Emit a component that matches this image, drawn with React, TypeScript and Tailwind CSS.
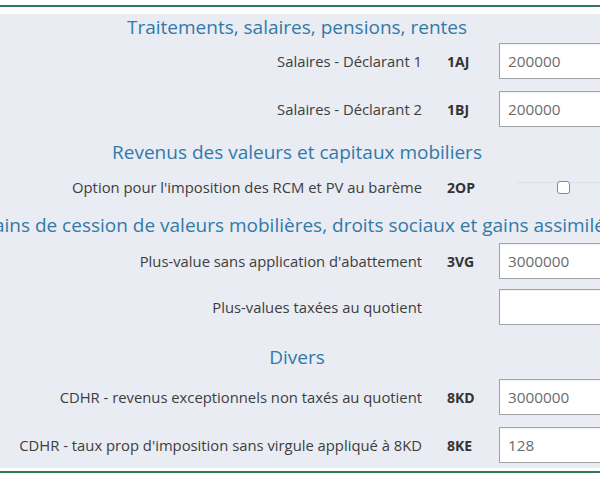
import type { ReactNode } from "react";

const font = { fontFamily: '"Open Sans", "Liberation Sans", sans-serif' };

function Heading({ children, className = "" }: { children: ReactNode; className?: string }) {
  // centred on the form column, long titles overflow on both sides
  return (
    <div className={`flex w-[594px] justify-center ${className}`}>
      <h2 className="shrink-0 whitespace-nowrap text-[19px] leading-[24px] font-normal text-[#3379a8]">{children}</h2>
    </div>
  );
}

function Row({
  label,
  code,
  value,
  className = "",
}: {
  label: string;
  code?: string;
  value?: string;
  className?: string;
}) {
  return (
    <div className={`grid h-[36px] grid-cols-[422px_77px_1fr] items-center ${className}`}>
      <span className="text-right text-[14.8px] whitespace-nowrap text-[#3d3d3d]">{label}</span>
      <span className="pl-[25px] text-[14px] font-bold text-[#333]">{code}</span>
      <input
        readOnly
        value={value ?? ""}
        className="h-[36px] w-[160px] border border-[#a2a2a2] bg-white px-[8px] text-[15.3px] text-[#6b6b6b] shadow-[inset_0_1px_1px_rgba(0,0,0,0.06)] outline-none"
      />
    </div>
  );
}

export default function App() {
  return (
    <div className="h-[480px] w-[600px] overflow-hidden bg-white pt-[5px]" style={font}>
      <div className="h-[2px] bg-[#2d7a5a]" />
      <div className="h-[7px]" />
      <div className="flex flex-col bg-[#e9ecf2] pt-[1px] pb-[5px]">
        <Heading>Traitements, salaires, pensions, rentes</Heading>
        <Row className="mt-[4px]" label="Salaires - Déclarant 1" code="1AJ" value="200000" />
        <Row className="mt-[12px]" label="Salaires - Déclarant 2" code="1BJ" value="200000" />

        <Heading className="mt-[13px]">Revenus des valeurs et capitaux mobiliers</Heading>
        <div className="mt-[12px] grid h-[20px] grid-cols-[422px_77px_1fr] items-center">
          <span className="text-right text-[14.8px] whitespace-nowrap text-[#3d3d3d]">
            Option pour l'imposition des RCM et PV au barème
          </span>
          <span className="pl-[25px] text-[14px] font-bold text-[#333]">2OP</span>
          <div className="ml-[18px] h-[14px] self-start mt-[6px] border-t border-[#dde1e7]">
            <div className="ml-[40px] -mt-[2px] h-[13px] w-[13px] rounded-[3px] border border-[#8a8a8a] bg-white" />
          </div>
        </div>

        <Heading className="mt-[17px]">
          Gains de cession de valeurs mobilières, droits sociaux et gains assimilés
        </Heading>
        <Row className="mt-[6px]" label="Plus-value sans application d'abattement" code="3VG" value="3000000" />
        <Row className="mt-[10px]" label="Plus-values taxées au quotient" />

        <Heading className="mt-[20px]">Divers</Heading>
        <Row className="mt-[10px]" label="CDHR - revenus exceptionnels non taxés au quotient" code="8KD" value="3000000" />
        <Row className="mt-[12px]" label="CDHR - taux prop d'imposition sans virgule appliqué à 8KD" code="8KE" value="128" />
      </div>
      <div className="h-[3px]" />
      <div className="h-[2px] bg-[#2d7a5a]" />
    </div>
  );
}
